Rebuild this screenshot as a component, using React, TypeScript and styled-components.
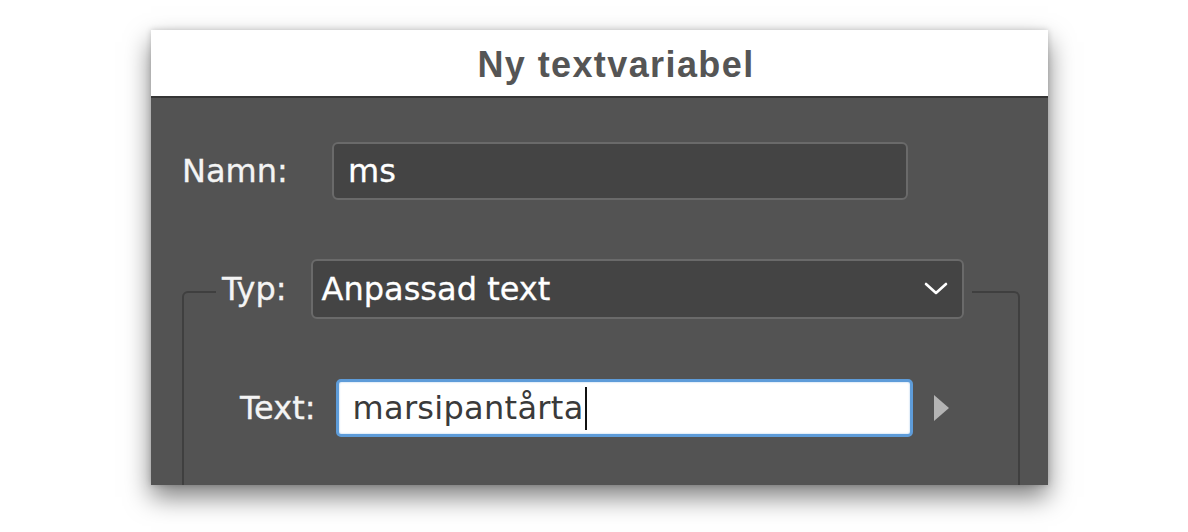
import React from "react";
import styled, { createGlobalStyle } from "styled-components";

const GlobalStyle = createGlobalStyle`
  html, body {
    margin: 0;
    padding: 0;
    background: #fff;
  }
  body {
    width: 1188px;
    height: 532px;
    overflow: hidden;
  }
`;

const Page = styled.div`
  padding: 30px 0 0 151px;
`;

const Dialog = styled.div`
  display: flex;
  flex-direction: column;
  width: 897px;
  height: 455px;
  background-color: #535353;
  box-shadow: 0 12px 24px rgba(0, 0, 0, 0.5), 0 0 6px rgba(0, 0, 0, 0.18);
  overflow: hidden;
`;

const TitleBar = styled.div`
  display: flex;
  flex-shrink: 0;
  align-items: center;
  justify-content: center;
  height: 68px;
  padding-left: 33px;
  padding-top: 4px;
  box-sizing: border-box;
  background-color: #fff;
  border-bottom: 2px solid #353535;
  font-family: "Liberation Sans", Arial, sans-serif;
  font-weight: 700;
  font-size: 36px;
  letter-spacing: 1.4px;
  color: #555;
`;

const Body = styled.div`
  flex: 1;
  padding: 44px 28px 0 31px;
  font-family: "DejaVu Sans", sans-serif;
  font-size: 32px;
  color: #f4f4f4;
  -webkit-text-stroke: 0.3px currentColor;
`;

const Row = styled.div`
  display: flex;
  align-items: center;
`;

const Label = styled.span<{ $width?: number }>`
  ${(p) => (p.$width ? `width: ${p.$width}px;` : "")}
  flex-shrink: 0;
  color: #f4f4f4;
`;

const DarkField = styled.div<{ $width: number; $height: number; $pad: number }>`
  display: flex;
  align-items: center;
  justify-content: space-between;
  box-sizing: border-box;
  width: ${(p) => p.$width}px;
  height: ${(p) => p.$height}px;
  padding: 0 14px 0 ${(p) => p.$pad}px;
  background-color: #444;
  border: 2px solid #6a6a6a;
  border-radius: 6px;
  color: #fff;
`;

const Group = styled.fieldset`
  margin: 59px 0 0 0;
  padding: 54px 0 0 0;
  height: 200px;
  border: 2px solid #3f3f3f;
  border-radius: 6px;
  min-width: 0;
`;

const Legend = styled.legend`
  display: flex;
  align-items: center;
  gap: 24px;
  margin-left: 32px;
  padding: 0 8px 6px 6px;
`;

const TextRow = styled(Row)`
  padding-left: 56px;
  gap: 20px;
`;

const FocusInput = styled.div`
  display: flex;
  align-items: center;
  box-sizing: border-box;
  width: 577px;
  height: 58px;
  padding-left: 14px;
  background-color: #fff;
  border: 3px solid #5e9cd9;
  border-radius: 5px;
  box-shadow: inset 0 0 2px rgba(94, 156, 217, 0.6);
  color: #3a3a3a;
  letter-spacing: 0.3px;
  -webkit-text-stroke: 0;
`;

const Caret = styled.span`
  display: inline-block;
  width: 2px;
  height: 43px;
  margin-left: 1px;
  background-color: #111;
`;

const Disclosure = styled.span`
  width: 0;
  height: 0;
  margin-left: 1px;
  border-top: 13px solid transparent;
  border-bottom: 13px solid transparent;
  border-left: 15px solid #b4b4b4;
`;

const Chevron = () => (
  <svg width="24" height="14" viewBox="0 0 24 14">
    <path
      d="M2 2 L12 11 L22 2"
      fill="none"
      stroke="#fff"
      strokeWidth="2.6"
      strokeLinecap="round"
      strokeLinejoin="round"
    />
  </svg>
);

const App: React.FC = () => {
  return (
    <>
      <GlobalStyle />
      <Page>
        <Dialog>
          <TitleBar>Ny textvariabel</TitleBar>
          <Body>
            <Row>
              <Label $width={150}>Namn:</Label>
              <DarkField $width={576} $height={58} $pad={14}>
                ms
              </DarkField>
            </Row>
            <Group>
              <Legend>
                <Label>Typ:</Label>
                <DarkField $width={653} $height={60} $pad={9}>
                  Anpassad text
                  <Chevron />
                </DarkField>
              </Legend>
              <TextRow>
                <Label>Text:</Label>
                <FocusInput>
                  marsipantårta
                  <Caret />
                </FocusInput>
                <Disclosure />
              </TextRow>
            </Group>
          </Body>
        </Dialog>
      </Page>
    </>
  );
};

export default App;
